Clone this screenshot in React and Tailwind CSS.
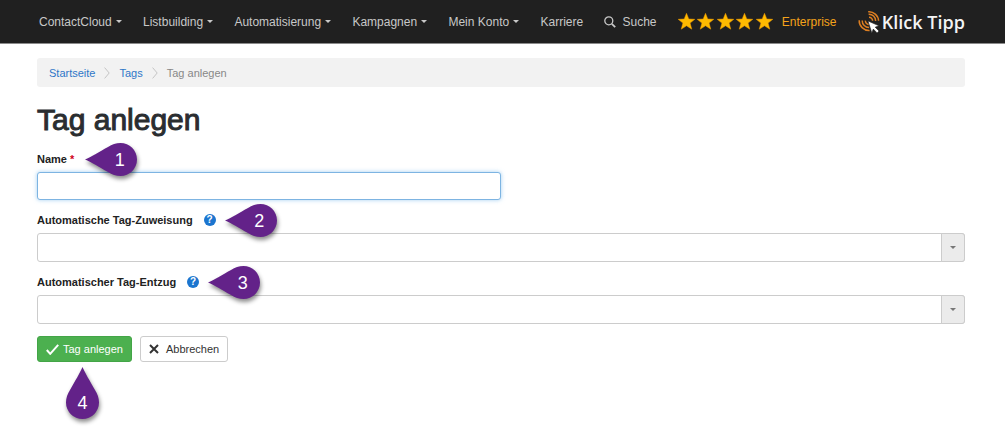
import React from "react";
import clsx from "clsx";

const NAV_ITEMS = [
  { label: "ContactCloud", menu: true },
  { label: "Listbuilding", menu: true },
  { label: "Automatisierung", menu: true },
  { label: "Kampagnen", menu: true },
  { label: "Mein Konto", menu: true },
  { label: "Karriere", menu: false },
];

function Caret({ className }) {
  return (
    <svg viewBox="0 0 6 3" className={clsx("h-[3px] w-[6px]", className)} fill="currentColor" aria-hidden="true">
      <path d="M0 0h6L3 3z" />
    </svg>
  );
}

function Stars() {
  return (
    <span className="flex w-[95px] justify-between" role="img" aria-label="5 Sterne">
      {[1, 2, 3, 4, 5].map((n) => (
        <svg key={n} viewBox="0 0 17 17" className="h-[17px] w-[17px]" aria-hidden="true">
          <path
            d="M8.5.3l2.300 5.700 6 .3-4.700 3.800 1.700 6.100-5.300-3.400-5.300 3.400 1.700-6.100L.2 6.300l6-.3z"
            fill="#ffba00"
            stroke="#f09a00"
            strokeWidth=".5"
          />
        </svg>
      ))}
    </span>
  );
}

function Logo() {
  return (
    <a href="#" className="flex items-center gap-[2px] text-[#f4f4f4]">
      <svg viewBox="0 0 22 22" className="h-[22px] w-[22px]" fill="none" aria-hidden="true">
        <g stroke="#dd7f22" strokeWidth="1.5">
          <path d="M11 6.200a3.600 3.600 0 0 1 3.600 3.600M10.600 3.200a6.600 6.600 0 0 1 7 6.800M10.200.8a9.600 9.600 0 0 1 10.400 9" />
          <path d="M7.400 9.600a3.600 3.600 0 0 0 3.400 3.800M4.200 9.400a6.800 6.800 0 0 0 7 7M1.200 9.200a9.800 9.800 0 0 0 10.400 10.200" />
        </g>
        <path
          d="M10 10l11 4.800-3.800 1.400 3.800 3.800-1.900 1.900-3.800-3.800-1.500 3.800z"
          fill="#fff"
          stroke="#202020"
          strokeWidth=".6"
        />
      </svg>
      <span className="font-['Open_Sans','Noto_Sans',sans-serif] text-[18px] leading-6 font-semibold">Klick Tipp</span>
    </a>
  );
}

function Navbar() {
  return (
    <header className="border-b border-[#8b8b8b] bg-[#202020] text-[12px] text-[#c8c8c8]">
      <nav className="flex h-[43px] items-center justify-between pr-10 pl-[39px]">
        {NAV_ITEMS.map((item) =>
          item.menu ? (
            <button key={item.label} type="button" className="flex items-center gap-1">
              {item.label}
              <Caret />
            </button>
          ) : (
            <a key={item.label} href="#">
              {item.label}
            </a>
          )
        )}
        <a href="#" className="flex items-center gap-[6px]">
          <svg viewBox="0 0 12 12" className="h-3 w-3" fill="none" stroke="currentColor" aria-hidden="true">
            <circle cx="4.8" cy="4.8" r="4" strokeWidth="1.3" />
            <path d="M7.8 7.8l3.4 3.4" strokeWidth="1.8" />
          </svg>
          Suche
        </a>
        <a href="#" className="flex items-center gap-[9px] text-[#f5a31a]">
          <Stars />
          Enterprise
        </a>
        <Logo />
      </nav>
    </header>
  );
}

function Separator() {
  return (
    <svg viewBox="0 0 6 12" className="h-3 w-[6px]" fill="none" stroke="#c4c4c4" aria-hidden="true">
      <path d="M.6.6L5.2 6 .6 11.4" />
    </svg>
  );
}

// Numbered drop marker, the tip points at the element it explains
function Marker({ number, up, className }) {
  return (
    <span
      className={clsx(
        "pointer-events-none absolute z-10 flex items-center justify-center text-[18px] leading-none font-normal text-white",
        up ? "h-[52px] w-[33px] pt-[19px]" : "h-[33px] w-[52px] pl-[17px]",
        className
      )}
    >
      <svg
        viewBox={up ? "0 0 33 52" : "0 0 52 33"}
        className="absolute inset-0 h-full w-full overflow-visible drop-shadow-[1px_3px_2px_rgba(0,0,0,0.45)]"
        fill="#632289"
        aria-hidden="true"
      >
        {up ? (
          <path d="M16.5 0C19 6 24 14 29 23c2.500 4 4 8 4 12.500a16.500 16.500 0 0 1-33 0C0 31 1.500 27 4 23 9 14 14 6 16.500 0z" />
        ) : (
          <path d="M0 16.500C6 14 14 9 23 4c4-2.500 8-4 12.500-4a16.500 16.500 0 0 1 0 33C31 33 27 31.500 23 29 14 24 6 19 0 16.500z" />
        )}
      </svg>
      <span className="relative">{number}</span>
    </span>
  );
}

function HelpLink() {
  return (
    <button
      type="button"
      aria-label="Hilfe"
      className="flex h-3 w-3 items-center justify-center rounded-full bg-[#1b75cf] text-[10px] leading-none font-bold text-white"
    >
      ?
    </button>
  );
}

function SelectField({ id, label, number }) {
  return (
    <div>
      <div className="mb-[3px] flex h-5 items-center">
        <div className="relative flex items-center gap-[11px]">
          <label htmlFor={id} className="font-bold">
            {label}
          </label>
          <HelpLink />
          <Marker number={number} className="-top-[6px] left-full ml-[9px]" />
        </div>
      </div>
      <div className="relative">
        <select
          id={id}
          className="block h-[29px] w-full appearance-none rounded-[3px] border border-[#cccccc] bg-white pr-8 pl-2"
        >
          <option value=""></option>
        </select>
        <span className="pointer-events-none absolute inset-y-0 right-0 flex w-6 items-center justify-center rounded-r-[3px] border border-[#cccccc] bg-[#ebebeb] text-[#777777]">
          <Caret />
        </span>
      </div>
    </div>
  );
}

function TagForm() {
  return (
    <form className="mt-[11px] flex flex-col gap-[10px]">
      <div>
        <div className="mb-[3px] flex h-5 items-center">
          <div className="relative flex items-center">
            <label htmlFor="tag-name" className="font-bold">
              Name <span className="text-[#d0021b]">*</span>
            </label>
            <Marker number="1" className="-top-[6px] left-full ml-[11px]" />
          </div>
        </div>
        <input
          id="tag-name"
          type="text"
          className="block h-7 w-1/2 rounded-[3px] border border-[#7db4e2] bg-white px-2 shadow-[0_0_4px_rgba(102,175,233,0.6)] outline-none"
        />
      </div>
      <SelectField id="tag-assign" label="Automatische Tag-Zuweisung" number="2" />
      <SelectField id="tag-remove" label="Automatischer Tag-Entzug" number="3" />
      <div className="mt-[2px] flex gap-2">
        <button
          type="submit"
          className="relative flex h-[26px] items-center gap-1 rounded-[3px] border border-[#43a547] bg-[#4cb04f] px-2 text-white"
        >
          <svg viewBox="0 0 13 11" className="h-[11px] w-[13px]" fill="none" stroke="currentColor" aria-hidden="true">
            <path d="M.8 6l3.400 3.800L12.200.8" strokeWidth="2" />
          </svg>
          Tag anlegen
          <Marker number="4" up className="top-full left-7 mt-[6px]" />
        </button>
        <button
          type="button"
          className="flex h-[26px] items-center gap-[7px] rounded-[3px] border border-[#cccccc] bg-white px-2 text-[#333333]"
        >
          <svg viewBox="0 0 10 10" className="h-[10px] w-[10px]" fill="none" stroke="currentColor" aria-hidden="true">
            <path d="M1 1l8 8M9 1L1 9" strokeWidth="2" />
          </svg>
          Abbrechen
        </button>
      </div>
    </form>
  );
}

function App() {
  return (
    <div className="min-h-screen bg-white font-['Liberation_Sans',Arial,sans-serif] text-[11px] leading-5 text-[#222222]">
      <Navbar />
      <main className="pt-[14px] pr-10 pl-[37px]">
        <nav
          aria-label="Breadcrumb"
          className="flex h-[29px] items-center gap-[9px] rounded-[3px] bg-[#f2f2f2] px-3 text-[#888888]"
        >
          <a href="#" className="text-[#2f77c8]">
            Startseite
          </a>
          <Separator />
          <a href="#" className="text-[#2f77c8]">
            Tags
          </a>
          <Separator />
          <span>Tag anlegen</span>
        </nav>
        <h1 className="mt-[15px] text-[30px] leading-9 [-webkit-text-stroke:1px_#2a2d30] text-[#2a2d30]">Tag anlegen</h1>
        <TagForm />
      </main>
    </div>
  );
}

export default App;
